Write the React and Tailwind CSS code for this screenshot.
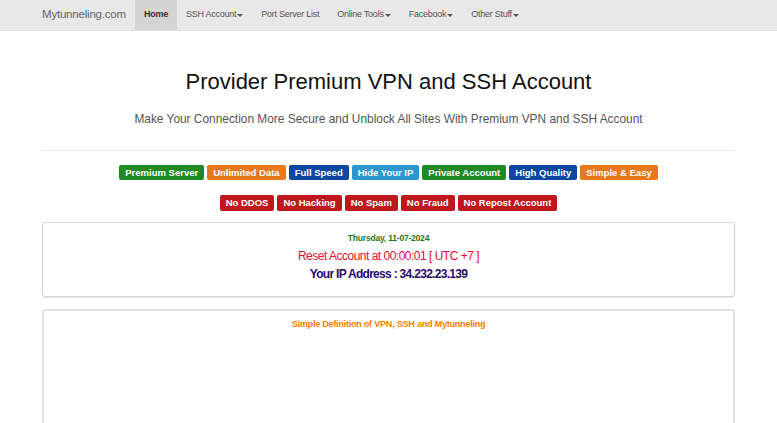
import { useState } from 'react';

const features = [
  { label: 'Premium Server', color: 'bg-[#1f8a24]' },
  { label: 'Unlimited Data', color: 'bg-[#e8781c]' },
  { label: 'Full Speed', color: 'bg-[#0d47a1]' },
  { label: 'Hide Your IP', color: 'bg-[#2b96cf]' },
  { label: 'Private Account', color: 'bg-[#1f8a24]' },
  { label: 'High Quality', color: 'bg-[#0d47a1]' },
  { label: 'Simple & Easy', color: 'bg-[#e8781c]' },
];

const rules = ['No DDOS', 'No Hacking', 'No Spam', 'No Fraud', 'No Repost Account'];

const navItems = [
  { label: 'Home', active: true },
  { label: 'SSH Account', caret: true },
  { label: 'Port Server List' },
  { label: 'Online Tools', caret: true },
  { label: 'Facebook', caret: true },
  { label: 'Other Stuff', caret: true },
];

function Caret() {
  return <span className="ml-[1px] inline-block w-0 h-0 border-l-[3px] border-r-[3px] border-t-[3px] border-l-transparent border-r-transparent border-t-[#555] align-middle" />;
}

function Badge({ label, color }) {
  return (
    <span className={`${color} text-white font-bold text-[9.5px] leading-none px-[6px] py-[3px] rounded-[2px] whitespace-nowrap`}>
      {label}
    </span>
  );
}

export default function App() {
  const [active] = useState('Home');

  return (
    <div className="min-h-screen bg-white font-['Liberation_Sans',Arial,sans-serif] overflow-hidden">
      <nav className="h-[31px] bg-[#e8e8e8] border-b border-[#e0e0e0] flex items-stretch pl-[33px]">
        <span className="px-[9px] flex items-center text-[11.5px] text-[#666] tracking-[-0.2px]">Mytunneling.com</span>
        {navItems.map((item) => (
          <span
            key={item.label}
            className={`px-[9px] flex items-center text-[9px] tracking-[-0.25px] ${
              item.label === active ? 'bg-[#d4d4d4] text-[#333] font-bold' : 'text-[#555]'
            }`}
          >
            {item.label}
            {item.caret && <Caret />}
          </span>
        ))}
      </nav>

      <div className="w-[693px] mx-auto">
        <h1 className="text-center text-[22px] text-[#111] mt-[40px] leading-none">
          Provider Premium VPN and SSH Account
        </h1>
        <p className="text-center text-[11.9px] text-[#555] mt-[21px] leading-none">
          Make Your Connection More Secure and Unblock All Sites With Premium VPN and SSH Account
        </p>
        <div className="mt-[24px] border-t border-[#e8e8e8]" />

        <div className="flex justify-center gap-[3px] mt-[14px]">
          {features.map((f) => (
            <Badge key={f.label} label={f.label} color={f.color} />
          ))}
        </div>
        <div className="flex justify-center gap-[3px] mt-[15px]">
          {rules.map((r) => (
            <Badge key={r} label={r} color="bg-[#c0171d]" />
          ))}
        </div>

        <div className="mt-[11px] border border-[#d8d8d8] rounded-[3px] shadow-[0_1px_2px_rgba(0,0,0,0.12)] h-[75px] flex flex-col items-center pt-[11px]">
          <div className="text-[8.5px] text-[#1a7a1a] font-bold tracking-[-0.2px] leading-none">Thursday, 11-07-2024</div>
          <div className="text-[12px] text-[#e0102f] mt-[8px] tracking-[-0.5px] leading-none">Reset Account at 00:00:01 [ UTC +7 ]</div>
          <div className="text-[12px] text-[#2b0a6b] font-bold mt-[6px] tracking-[-0.7px] leading-none">Your IP Address : 34.232.23.139</div>
        </div>

        <div className="mt-[12px] border-2 border-[#e3e3e3] rounded-[3px] h-[140px] flex flex-col items-center pt-[9px]">
          <div className="text-[9.2px] text-[#ff7f00] font-bold tracking-[-0.3px] leading-none">
            Simple Definition of VPN, SSH and Mytunneling
          </div>
        </div>
      </div>
    </div>
  );
}
